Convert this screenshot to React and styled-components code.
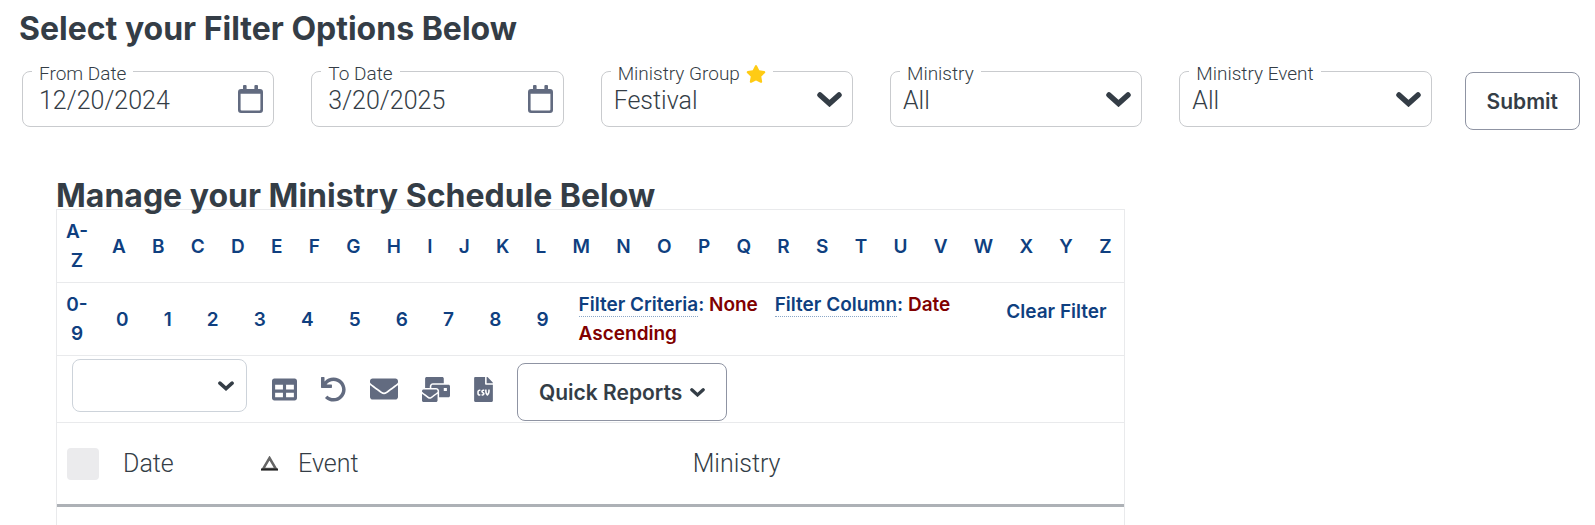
import React from 'react';
import styled, { createGlobalStyle } from 'styled-components';
import {
    FaEnvelope,
    FaFileCsv,
    FaMailBulk,
    FaStar,
    FaTable,
    FaUndo
} from 'react-icons/fa';

const GlobalStyle = createGlobalStyle`
    *, *::before, *::after {
        box-sizing: border-box;
    }

    body {
        margin: 0;
        background: #fff;
        color: #343d46;
        font-family: Roboto, "Liberation Sans", sans-serif;
        font-size: 25px;
        font-weight: 300;
    }

    button, input, select {
        font: inherit;
        color: inherit;
    }
`;

const Page = styled.main`
    padding-top: 16px;
`;

const Heading = styled.h2`
    margin: 0;
    font-family: Inter, "Liberation Sans", sans-serif;
    font-size: 32px;
    font-weight: 700;
    line-height: 26px;
    white-space: nowrap;
`;

const Filters = styled.form`
    padding: 0 15px 0 19px;
`;

const FilterRow = styled.div`
    display: flex;
    align-items: flex-end;
    gap: 33px;
    padding: 19px 0 0 3px;
`;

const Fields = styled.div`
    display: flex;
    flex: 1;
    gap: 37px;
    padding-bottom: 3px;
`;

const Field = styled.fieldset`
    flex: 1;
    min-width: 0;
    height: 66px;
    margin: 0;
    padding: 0;
    border: 1px solid #c9cbce;
    border-radius: 8px;
`;

const Legend = styled.legend`
    display: flex;
    align-items: center;
    gap: 6px;
    height: 20px;
    margin-left: 9px;
    padding: 6px 7px 0;
    font-size: 19px;
    line-height: 20px;
    white-space: nowrap;

    svg {
        color: #ffcb14;
        font-size: 20px;
    }
`;

const Control = styled.div`
    display: grid;
    grid-template-columns: 1fr auto;
    align-items: center;
    height: 36px;
    padding: 0 10px;
`;

const DateInput = styled.input`
    width: 100%;
    min-width: 0;
    padding: 2px 0 0 6px;
    border: 0;
    outline: 0;
    background: none;
`;

const SelectInput = styled.select`
    grid-area: 1 / 1 / 2 / 3;
    width: 100%;
    height: 100%;
    padding: 2px 32px 0 2px;
    border: 0;
    outline: 0;
    background: none;
    appearance: none;
`;

const ChevronSvg = styled.svg`
    grid-area: 1 / 2 / 2 / 3;
    pointer-events: none;
`;

const IconButton = styled.button`
    display: flex;
    padding: 0;
    border: 0;
    background: none;
    color: #626b80;
`;

const Button = styled.button`
    display: flex;
    align-items: center;
    justify-content: center;
    gap: 8px;
    height: 58px;
    padding: 0 21px;
    border: 1px solid #8f94a3;
    border-radius: 8px;
    background: #fff;
    font-family: Inter, "Liberation Sans", sans-serif;
    font-size: 21px;
    font-weight: 600;
    white-space: nowrap;
`;

const Schedule = styled.section`
    width: 67%;
    margin: 53px 0 0 56px;
`;

const Grid = styled.div`
    min-height: 316px;
    border: 1px solid #e9eaec;
    border-bottom: 0;
`;

const LinkRow = styled.nav`
    display: flex;
    height: 73px;
    padding: 7px 12px 7px 5px;
    border-bottom: 1px solid #e9eaec;
    font-family: Inter, "Liberation Sans", sans-serif;
    font-size: 19px;
    font-weight: 600;
    line-height: 29px;
`;

const FilterLink = styled.a`
    color: #0f3f80;
    text-align: center;
    text-decoration: none;
`;

const RangeLink = styled(FilterLink)`
    width: 30px;
`;

const Links = styled.div`
    display: flex;
    flex: ${props => props.$basis ? `0 0 ${props.$basis}` : 1};
    align-items: center;
    justify-content: space-between;
    padding-left: ${props => props.$indent}px;
`;

const Criteria = styled.p`
    flex: 1;
    margin: 0 0 0 30px;
    color: #800000;
`;

const Term = styled.span`
    color: #0f3f80;

    abbr {
        border-bottom: 1px dotted #8ba7c7;
        text-decoration: none;
    }
`;

const Value = styled.span`
    margin-right: ${props => props.$gap || 0}px;
`;

const ClearLink = styled(FilterLink)`
    align-self: flex-start;
    padding: 7px 5px 0 20px;
    white-space: nowrap;
`;

const Toolbar = styled.div`
    display: flex;
    height: 67px;
    padding: 3px 15px 0;
    border-bottom: 1px solid #e9eaec;
`;

const ActionSelect = styled.div`
    display: grid;
    grid-template-columns: 1fr auto;
    align-items: center;
    width: 175px;
    height: 53px;
    padding: 0 12px;
    border: 1px solid #cdd3da;
    border-radius: 8px;
`;

const Actions = styled.div`
    display: flex;
    align-items: center;
    gap: 24px;
    height: 60px;
    margin: 0 24px 0 25px;
`;

const ReportsButton = styled(Button)`
    margin-top: 4px;
`;

const Table = styled.table`
    width: 100%;
    border-spacing: 0;
    table-layout: fixed;

    th {
        height: 84px;
        padding: 0;
        border-bottom: 3px solid #adb1b6;
        font-weight: 300;
        text-align: left;
    }
`;

const Column = styled.col`
    width: ${props => props.$width};
`;

const Checkbox = styled.input`
    display: block;
    width: 32px;
    height: 32px;
    margin: 0 0 0 10px;
    border-radius: 4px;
    background: #ebebed;
    appearance: none;
`;

const SortHeader = styled.div`
    display: flex;
    align-items: center;
    justify-content: space-between;
    padding-right: 20px;
`;

const Chevron = ({ width, height }) => (
    <ChevronSvg width={width} height={height} viewBox="0 0 25 15" aria-hidden="true">
        <path
            d="M3 3l9.500 8.500L22 3"
            fill="none"
            stroke="currentColor"
            strokeWidth="5.500"
            strokeLinecap="round"
        />
    </ChevronSvg>
);

const CalendarIcon = () => (
    <svg width="25" height="28" viewBox="0 0 25 28" fill="currentColor" aria-hidden="true">
        <path
            fillRule="evenodd"
            d="M5 1a1 1 0 0 1 1-1h1.600a1 1 0 0 1 1 1v3h7.800V1a1 1 0 0 1 1-1H19a1 1 0 0 1 1 1v3h2a3 3 0 0 1 3 3v18a3 3 0 0 1-3 3H3a3 3 0 0 1-3-3V7a3 3 0 0 1 3-3h2zM2.600 8.800v15.700a1 1 0 0 0 1 1h17.800a1 1 0 0 0 1-1V8.800z"
        />
    </svg>
);

const SortIcon = () => (
    <svg width="17" height="15" viewBox="0 0 17 15" aria-hidden="true">
        <path d="M8.500 2 15 13H2z" fill="#fff" stroke="#666" strokeWidth="2.500" />
        <path d="M0 13.500h17" stroke="#222" strokeWidth="2" />
    </svg>
);

const letters = 'ABCDEFGHIJKLMNOPQRSTUVWXYZ'.split('');
const digits = '0123456789'.split('');

const actions = [
    { title: 'Grid view', icon: FaTable, width: 25, height: 25 },
    { title: 'Reset', icon: FaUndo, width: 25, height: 25 },
    { title: 'Email', icon: FaEnvelope, width: 28, height: 28 },
    { title: 'Bulk mail', icon: FaMailBulk, width: 28, height: 25 },
    { title: 'Export CSV', icon: FaFileCsv, width: 19, height: 25 }
];

const DateField = ({ id, label, value }) => (
    <Field>
        <Legend><label htmlFor={id}>{label}</label></Legend>
        <Control>
            <DateInput id={id} type="text" defaultValue={value} />
            <IconButton type="button" aria-label={`Choose ${label}`}>
                <CalendarIcon />
            </IconButton>
        </Control>
    </Field>
);

const SelectField = ({ id, label, value, required }) => (
    <Field>
        <Legend>
            <label htmlFor={id}>{label}</label>
            {required && <FaStar />}
        </Legend>
        <Control>
            <SelectInput id={id} defaultValue={value}>
                <option>{value}</option>
            </SelectInput>
            <Chevron width={25} height={15} />
        </Control>
    </Field>
);

const App = () => (
    <Page>
        <GlobalStyle />
        <Filters onSubmit={e => e.preventDefault()}>
            <Heading>Select your Filter Options Below</Heading>
            <FilterRow>
                <Fields>
                    <DateField id="from" label="From Date" value="12/20/2024" />
                    <DateField id="to" label="To Date" value="3/20/2025" />
                    <SelectField id="group" label="Ministry Group" value="Festival" required />
                    <SelectField id="ministry" label="Ministry" value="All" />
                    <SelectField id="event" label="Ministry Event" value="All" />
                </Fields>
                <Button type="submit">Submit</Button>
            </FilterRow>
        </Filters>

        <Schedule>
            <Heading>Manage your Ministry Schedule Below</Heading>
            <Grid>
                <LinkRow aria-label="Filter by letter">
                    <RangeLink href="#a-z">A- Z</RangeLink>
                    <Links $indent={20}>
                        {letters.map(item => (
                            <FilterLink key={item} href={`#${item}`}>{item}</FilterLink>
                        ))}
                    </Links>
                </LinkRow>
                <LinkRow aria-label="Filter by number">
                    <RangeLink href="#0-9">0- 9</RangeLink>
                    <Links $indent={24} $basis="43.5%">
                        {digits.map(item => (
                            <FilterLink key={item} href={`#${item}`}>{item}</FilterLink>
                        ))}
                    </Links>
                    <Criteria>
                        <Term><abbr>Filter Criteria</abbr>:</Term>{' '}
                        <Value $gap={12}>None</Value>{' '}
                        <Term><abbr>Filter Column</abbr>:</Term>{' '}
                        <Value>Date</Value>{' '}
                        <Value>Ascending</Value>
                    </Criteria>
                    <ClearLink href="#clear">Clear Filter</ClearLink>
                </LinkRow>
                <Toolbar>
                    <ActionSelect>
                        <SelectInput aria-label="Action" defaultValue="">
                            <option value="" />
                        </SelectInput>
                        <Chevron width={16} height={10} />
                    </ActionSelect>
                    <Actions>
                        {actions.map(({ title, icon: Icon, width, height }) => (
                            <IconButton key={title} type="button" title={title}>
                                <Icon style={{ width, height }} />
                            </IconButton>
                        ))}
                    </Actions>
                    <ReportsButton type="button">
                        Quick Reports <Chevron width={15} height={9} />
                    </ReportsButton>
                </Toolbar>
                <Table>
                    <colgroup>
                        <Column $width="66px" />
                        <Column $width="175px" />
                        <Column $width="37%" />
                        <Column />
                    </colgroup>
                    <thead>
                        <tr>
                            <th><Checkbox type="checkbox" aria-label="Select all" /></th>
                            <th><SortHeader>Date <SortIcon /></SortHeader></th>
                            <th>Event</th>
                            <th>Ministry</th>
                        </tr>
                    </thead>
                </Table>
            </Grid>
        </Schedule>
    </Page>
);

export default App;
